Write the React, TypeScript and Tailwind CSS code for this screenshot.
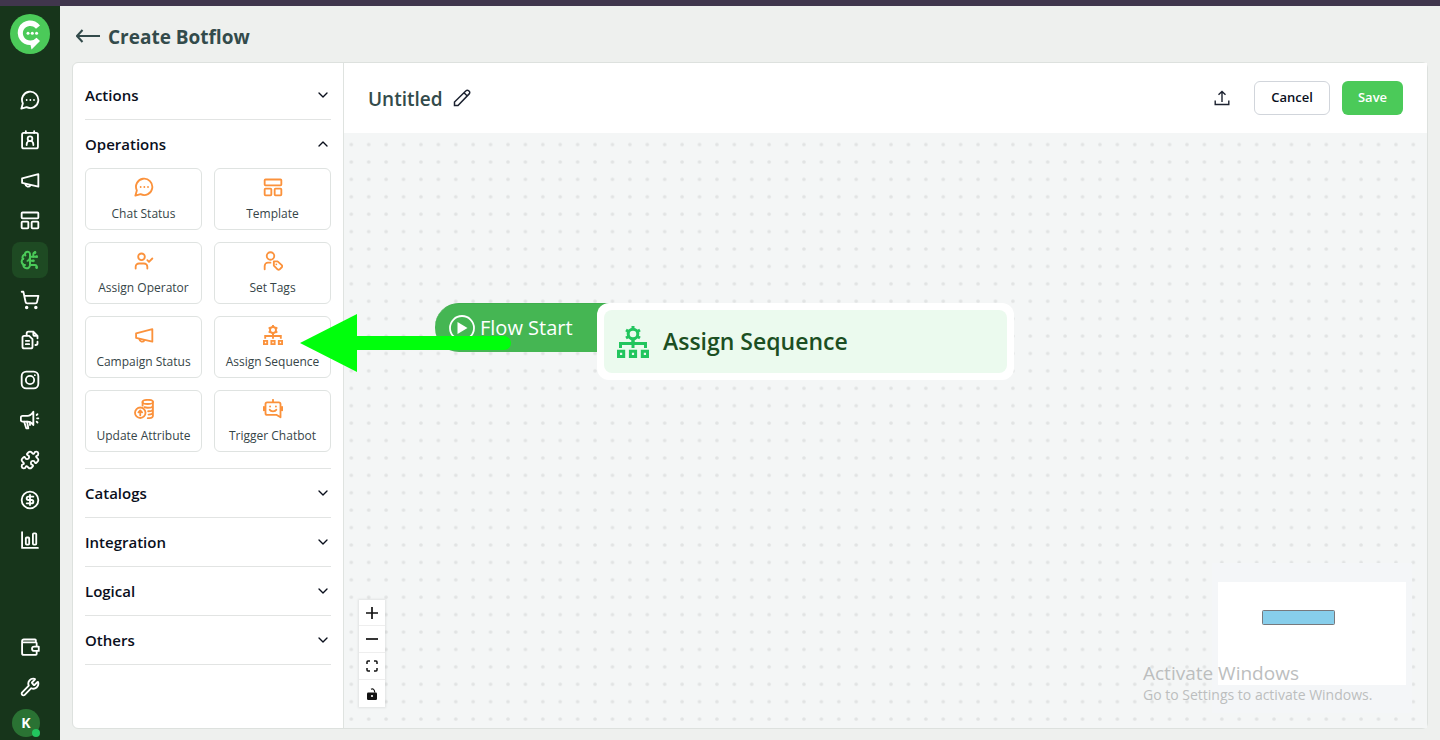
import type { ReactNode } from "react";
import {
  BrainCircuit,
  ChevronDown,
  ChevronUp,
  CircleDollarSign,
  Puzzle,
  ShoppingCart,
  UserCheck,
  Wrench,
} from "lucide-react";

interface GlyphProps {
  children: ReactNode;
  className?: string;
}

const Glyph = ({ children, className = "size-5" }: GlyphProps) => (
  <svg
    viewBox="0 0 24 24"
    fill="none"
    stroke="currentColor"
    strokeWidth="2.2"
    strokeLinecap="round"
    strokeLinejoin="round"
    className={className}
    aria-hidden="true"
  >
    {children}
  </svg>
);

const ChatIcon = () => (
  <Glyph>
    <path d="M7.9 20.6A9.8 9.8 0 1 0 3.4 16.1L1.6 22.4Z" />
    <path d="M8 12h.01M12.4 12h.01M16.8 12h.01" />
  </Glyph>
);

const ContactIcon = () => (
  <Glyph>
    <rect x="2.5" y="3.500" width="19" height="18.500" rx="2" />
    <path d="M7 1.500v2M17 1.500v2" />
    <circle cx="12" cy="10.500" r="2.800" />
    <path d="M8 18v-1a4 4 0 0 1 8 0v1" />
  </Glyph>
);

const MegaphoneIcon = () => (
  <Glyph>
    <path d="M2.500 10 22 5v15L2.500 15.500Z" />
    <path d="M6.500 17a3.200 3.200 0 0 0 6 1.300" />
  </Glyph>
);

const TemplateIcon = () => (
  <Glyph>
    <rect x="2" y="3" width="20" height="7" rx="1" />
    <rect x="2" y="14" width="8" height="8" rx="1" />
    <rect x="14" y="14" width="8" height="8" rx="1" />
  </Glyph>
);

const InstagramIcon = () => (
  <Glyph>
    <rect x="2" y="2" width="20" height="20" rx="5.500" />
    <circle cx="12" cy="12" r="5" />
    <path d="M17.800 6.200h.01" />
  </Glyph>
);

const FilesIcon = () => (
  <Glyph>
    <path d="M5 7h6l4 4v9a2 2 0 0 1-2 2H5a2 2 0 0 1-2-2V9a2 2 0 0 1 2-2Z" />
    <path d="M8 6.500V4a2 2 0 0 1 2-2h6l5 5v3M21 14v2a2 2 0 0 1-2 2h-.5M16 2v3a2 2 0 0 0 2 2h3" />
    <path d="M7 13h4M7 17h4" />
  </Glyph>
);

const LoudIcon = () => (
  <Glyph>
    <path d="M3 7h6c3 0 5-2 7-5v16c-2-3-4-4-7-4H3a2 2 0 0 1-2-2V9a2 2 0 0 1 2-2Z" />
    <path d="m5 14 2.500 8H10l-1.500-8M12 14.500V18" />
    <path d="M20 6l1-1M20.500 10H22M20 14l1 1" />
  </Glyph>
);

const ChartIcon = () => (
  <Glyph>
    <path d="M2.500 2.500v19h19" />
    <rect x="7" y="9" width="4" height="8.500" rx="1" />
    <rect x="15.500" y="4" width="4" height="13.500" rx="1" />
  </Glyph>
);

const WalletIcon = () => (
  <Glyph>
    <path d="M19 6V4a1 1 0 0 0-1-1H4.500a2 2 0 0 0-2 2v14.500a2 2 0 0 0 2 2H19a1 1 0 0 0 1-1V17M2.500 6.500H19a1 1 0 0 1 1 1V11" />
    <path d="M22.500 11.500H17a2.500 2.500 0 0 0 0 5.200h5.500Z" />
  </Glyph>
);

const SetTagsIcon = () => (
  <Glyph>
    <circle cx="9" cy="6" r="4.500" />
    <path d="M2 22v-4a4 4 0 0 1 4-4h3" />
    <path d="M13 12.500h4.500l5 4.500a1.800 1.800 0 0 1 0 2.500l-2.500 2.500a1.800 1.800 0 0 1-2.500 0L13 17.500Z" />
    <path d="M16 16h.01" />
  </Glyph>
);

const SequenceIcon = ({ className = "size-5" }: { className?: string }) => (
  <svg viewBox="0 0 32 32" fill="none" stroke="currentColor" strokeWidth="3" className={className} aria-hidden="true">
    <circle cx="16" cy="8" r="4.800" />
    <path d="M16 4V0M16 16v-4M12.500 6 9 4M19.500 6 23 4M12.500 10 9 12M19.500 10l3.500 2" />
    <path d="M16 12v10M3.500 22v-4.500h25V22" />
    <path d="M1.500 25.300h5.200v5.200H1.500zM13.400 25.300h5.200v5.200h-5.200zM25.300 25.300h5.200v5.200h-5.200z" />
  </svg>
);

const AttributeIcon = () => (
  <Glyph>
    <ellipse cx="16.500" cy="3.500" rx="6.300" ry="2.500" />
    <path d="M10.300 3.500V8M22.700 3.500V20c0 1.500-2.500 3-6.200 3M22.500 8c0 1.500-2.500 2.500-6 2.500-1.500 0-3-.2-4-.7M22.500 12.200c0 1.500-2.500 2.500-5.500 2.500M22.500 16.200c0 1.500-2 2.500-5 2.500" />
    <circle cx="7.500" cy="16.500" r="6.300" />
    <path d="M7.500 19.500v-5.500M5.300 16l2.200-2.200L9.700 16" />
  </Glyph>
);

const BotIcon = () => (
  <Glyph>
    <path d="M5 4h14a2 2 0 0 1 2 2v16l-5-3H5a2 2 0 0 1-2-2V6a2 2 0 0 1 2-2ZM12 4V1M1 9.500v4M23 9.500v4" />
    <path d="M8.500 9h.01M15.500 9h.01M8 13c1.500 2.500 6.500 2.500 8 0" />
  </Glyph>
);

const navItems = [
  { label: "Chats", icon: <ChatIcon /> },
  { label: "Contacts", icon: <ContactIcon /> },
  { label: "Campaigns", icon: <MegaphoneIcon /> },
  { label: "Templates", icon: <TemplateIcon /> },
  { label: "Botflow", icon: <BrainCircuit className="size-5" strokeWidth={2.4} />, active: true },
  { label: "Commerce", icon: <ShoppingCart className="size-5" strokeWidth={2.2} /> },
  { label: "Forms", icon: <FilesIcon /> },
  { label: "Instagram", icon: <InstagramIcon /> },
  { label: "Ads", icon: <LoudIcon /> },
  { label: "Integrations", icon: <Puzzle className="size-5" strokeWidth={2.2} /> },
  { label: "Billing", icon: <CircleDollarSign className="size-5" strokeWidth={2.2} /> },
  { label: "Analytics", icon: <ChartIcon /> },
];

const operations = [
  { label: "Chat Status", icon: <ChatIcon /> },
  { label: "Template", icon: <TemplateIcon /> },
  { label: "Assign Operator", icon: <UserCheck className="size-5" strokeWidth={2.2} /> },
  { label: "Set Tags", icon: <SetTagsIcon /> },
  { label: "Campaign Status", icon: <MegaphoneIcon /> },
  { label: "Assign Sequence", icon: <SequenceIcon /> },
  { label: "Update Attribute", icon: <AttributeIcon /> },
  { label: "Trigger Chatbot", icon: <BotIcon /> },
];

const sections = ["Actions", "Operations", "Catalogs", "Integration", "Logical", "Others"];

const Sidebar = () => (
  <nav className="w-[60px] shrink-0 bg-[#17351b] text-white flex flex-col items-center pt-2 pb-[3px]">
    <svg viewBox="0 0 40 40" className="size-10 shrink-0" aria-label="Logo">
      <circle cx="20" cy="20" r="20" fill="#4bca59" />
      <path
        d="M30 11.500A12.300 12.300 0 1 0 20.500 31L21.500 35.500 30 27l-3.500-3.200a7.800 7.800 0 0 1-6 2.700A7.300 7.300 0 1 1 26 14.800Z"
        fill="#fff"
      />
      <circle cx="18" cy="19.200" r="1.500" fill="#fff" />
      <circle cx="22.300" cy="19.200" r="1.500" fill="#fff" />
      <circle cx="26.600" cy="19.200" r="1.500" fill="#fff" />
    </svg>
    <ul className="mt-7 flex flex-col gap-1">
      {navItems.map((item) => (
        <li key={item.label}>
          <a
            href="#"
            aria-label={item.label}
            className={`size-9 rounded-lg flex items-center justify-center ${
              item.active ? "bg-[#1e4a23] text-[#4bca59]" : ""
            }`}
          >
            {item.icon}
          </a>
        </li>
      ))}
    </ul>
    <div className="mt-auto flex flex-col gap-1">
      <a href="#" aria-label="Wallet" className="size-9 flex items-center justify-center">
        <WalletIcon />
      </a>
      <a href="#" aria-label="Settings" className="size-9 flex items-center justify-center">
        <Wrench className="size-5" strokeWidth={2.2} />
      </a>
      <button className="relative size-7 rounded-full bg-[#2a7233] text-sm font-bold">
        K
        <span className="absolute right-0 bottom-0 size-2 rounded-full bg-[#22c55e]" />
      </button>
    </div>
  </nav>
);

const BlockPanel = () => (
  <aside className="w-[271px] shrink-0 border-r border-[#dfe3e0] px-3 pt-2">
    {sections.map((name) => {
      const open = name === "Operations";
      return (
        <section key={name} className="border-b border-[#e2e4e3]">
          <button
            aria-expanded={open}
            className="w-full h-12 flex items-center justify-between text-[15px] font-semibold text-[#0a0f1c]"
          >
            {name}
            {open ? <ChevronUp className="size-4" /> : <ChevronDown className="size-4" />}
          </button>
          {open && (
            <div className="grid grid-cols-2 gap-3 pb-4">
              {operations.map((op) => (
                <button
                  key={op.label}
                  className="h-[62px] rounded-md border border-[#dfe3e1] flex flex-col items-center pt-2 gap-2 text-xs leading-[18px] whitespace-nowrap text-[#364548]"
                >
                  <span className="text-[#fb923c]">{op.icon}</span>
                  {op.label}
                </button>
              ))}
            </div>
          )}
        </section>
      );
    })}
  </aside>
);

const Toolbar = () => (
  <div className="h-[70px] shrink-0 bg-white px-6 flex items-center">
    <h2 className="pt-0.5 text-[19px] font-semibold text-[#334b4b]">Untitled</h2>
    <button aria-label="Rename" className="ml-2.5 text-[#1c2230]">
      <svg viewBox="0 0 18 18" className="size-[18px]" fill="none" stroke="currentColor" strokeWidth="1.500">
        <path d="M1.500 16.500v-3.500L13 1.700a1.800 1.800 0 0 1 2.600 0l.6.600a1.800 1.800 0 0 1 0 2.600L5 16.500ZM11 3.700 14.300 7" />
      </svg>
    </button>
    <button aria-label="Export" className="ml-auto text-[#1c2230]">
      <svg viewBox="0 0 16 16" className="size-4" fill="none" stroke="currentColor" strokeWidth="1.400">
        <path d="M8 12V2M4.500 4.800 8 1.500l3.500 3.300M1.200 10.500v4h13.600v-4" />
      </svg>
    </button>
    <button className="ml-6 h-[34px] w-[76px] rounded-md border border-[#d1d5db] text-[13px] font-semibold text-[#0a0f1c]">
      Cancel
    </button>
    <button className="ml-3 h-[34px] w-[61px] rounded-md bg-[#4bca59] text-[13px] font-semibold text-white">
      Save
    </button>
  </div>
);

const ZoomControls = () => (
  <div className="absolute left-[15px] bottom-[21px] w-[26px] bg-white text-[#111] shadow-[0_0_2px_1px_rgba(0,0,0,0.08)] divide-y divide-[#eee]">
    <button aria-label="Zoom in" className="w-full h-[26px] flex items-center justify-center">
      <svg viewBox="0 0 12 12" className="size-3" stroke="currentColor" strokeWidth="1.700">
        <path d="M6 0v12M0 6h12" />
      </svg>
    </button>
    <button aria-label="Zoom out" className="w-full h-[27px] flex items-center justify-center">
      <svg viewBox="0 0 12 12" className="size-3" stroke="currentColor" strokeWidth="1.700">
        <path d="M0 6h12" />
      </svg>
    </button>
    <button aria-label="Fit view" className="w-full h-[27px] flex items-center justify-center">
      <svg viewBox="0 0 12 12" className="size-3" fill="none" stroke="currentColor" strokeWidth="1.500">
        <path d="M1 4V2a1 1 0 0 1 1-1h2M8 1h2a1 1 0 0 1 1 1v2M11 8v2a1 1 0 0 1-1 1H8M4 11H2a1 1 0 0 1-1-1V8" />
      </svg>
    </button>
    <button aria-label="Lock" className="w-full h-[27px] flex items-center justify-center">
      <svg viewBox="0 0 12 12" className="size-3" fill="none">
        <rect x="1" y="4.500" width="10" height="7.500" rx="1.200" fill="currentColor" />
        <path d="M5 1.300C7 .3 8.700 1.500 8.700 4.500" stroke="currentColor" strokeWidth="1.200" />
        <circle cx="6" cy="8" r="1.100" fill="#fff" />
      </svg>
    </button>
  </div>
);

const Canvas = () => (
  <div className="relative flex-1 overflow-hidden bg-[#f4f6f6]">
    <svg className="absolute inset-0 size-full" aria-hidden="true">
      <defs>
        <pattern id="dots" x="-1.400" y="2.800" width="17.410" height="17.410" patternUnits="userSpaceOnUse">
          <circle cx="8.700" cy="8.700" r="1.800" fill="#e1e3e3" />
        </pattern>
      </defs>
      <rect width="100%" height="100%" fill="url(#dots)" />
    </svg>

    <div className="absolute left-[91px] top-[170px] w-[180px] h-[49px] rounded-l-3xl bg-[#45b653] border-t border-[#3fae4d] flex items-center gap-[5px] pl-3.5 text-white">
      <svg viewBox="0 0 26 26" className="size-[26px]" aria-hidden="true">
        <circle cx="13" cy="13" r="12" fill="none" stroke="currentColor" strokeWidth="1.800" />
        <path d="M8.500 7v12l10-6Z" fill="currentColor" />
      </svg>
      <span className="text-xl">Flow Start</span>
    </div>

    <div className="absolute left-[253px] top-[170px] w-[417px] h-[77px] rounded-xl bg-white p-[7px]">
      <div className="h-full rounded-lg bg-[#ebfaee] flex items-center gap-3.5 pl-[13px] text-[#1b4f22]">
        <SequenceIcon className="size-8 text-[#22c55e]" />
        <span className="text-[23px] font-semibold">Assign Sequence</span>
      </div>
    </div>

    <ZoomControls />

    <div className="absolute right-[15px] bottom-[15px] w-[200px] h-[150px] bg-[#f4f6f8]">
      <svg viewBox="0 0 200 150" className="size-full" aria-hidden="true">
        <rect x="6" y="19" width="188" height="103" fill="#fff" />
        <rect x="50.500" y="47.500" width="72" height="14" rx="1" fill="#87ceeb" stroke="#77797d" />
      </svg>
    </div>
  </div>
);

export default function App() {
  return (
    <div className="relative h-screen flex flex-col overflow-hidden bg-[#eef0ee] font-['Open_Sans',sans-serif]">
      <div className="h-1.5 shrink-0 bg-[#40364d]" />
      <div className="flex-1 min-h-0 flex">
        <Sidebar />
        <main className="flex-1 min-w-0 flex flex-col px-3 pb-[11px]">
          <header className="h-14 shrink-0 flex items-center gap-2 pl-1 pt-1 text-[#334b4b]">
            <button aria-label="Back">
              <svg viewBox="0 0 24 14" className="w-6 h-3.5" fill="none" stroke="currentColor" strokeWidth="2">
                <path d="M24 7H1M6.500 1 1 7l5.500 6" />
              </svg>
            </button>
            <h1 className="pt-0.5 text-[19px] font-bold">Create Botflow</h1>
          </header>
          <div className="relative flex-1 min-h-0 flex rounded-md border border-[#dde1de] bg-white">
            <BlockPanel />
            <div className="flex-1 min-w-0 flex flex-col">
              <Toolbar />
              <Canvas />
            </div>
            {/* Pointer from the canvas to the block being dragged */}
            <svg viewBox="0 0 212 58" className="absolute left-[227px] top-[251px] w-[212px] h-[58px]" fill="#00ff0c" aria-hidden="true">
              <path d="M0 29 57 0v22h147a7 7 0 0 1 0 14H57v22Z" />
            </svg>
          </div>
        </main>
      </div>

      <div className="absolute right-[60px] bottom-[35px] text-[#bcbebe] w-[237px] whitespace-nowrap">
        <p className="text-[19px] leading-6">Activate Windows</p>
        <p className="text-sm leading-5">Go to Settings to activate Windows.</p>
      </div>
    </div>
  );
}
